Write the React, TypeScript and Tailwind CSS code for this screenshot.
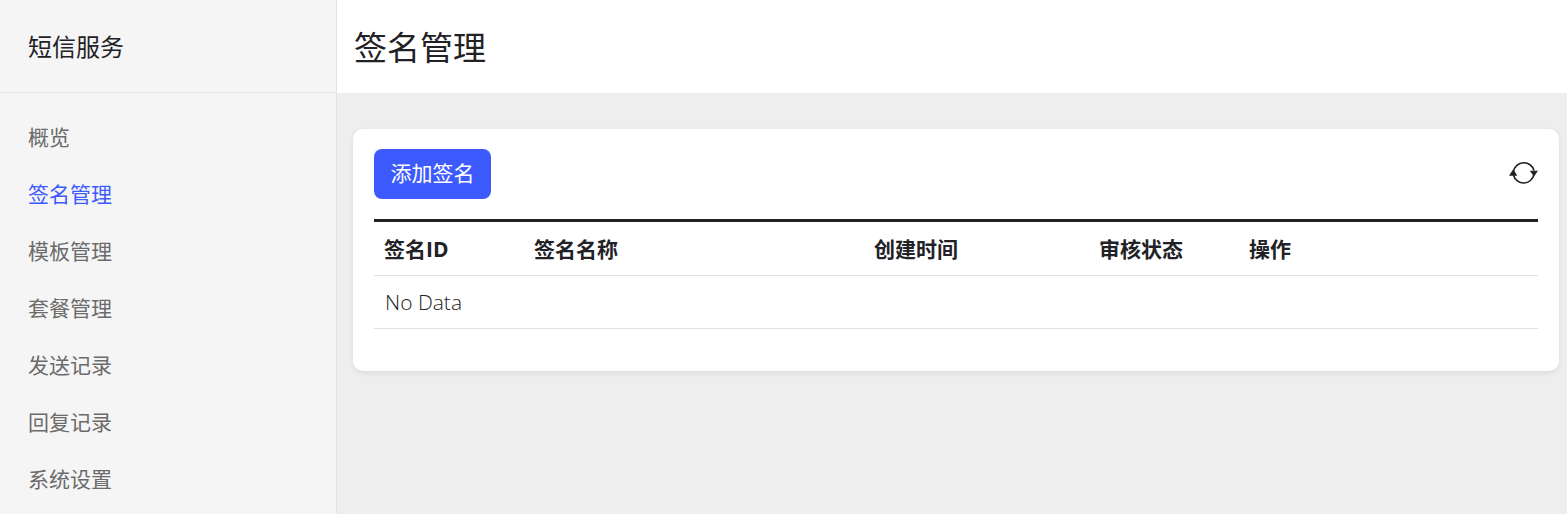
const font = { fontFamily: '"Open Sans", "Noto Sans CJK SC", sans-serif' };
const items = ['概览', '签名管理', '模板管理', '套餐管理', '发送记录', '回复记录', '系统设置'];
const cols = [
  { t: '签名ID', w: 'w-[150px]' },
  { t: '签名名称', w: 'w-[340px]' },
  { t: '创建时间', w: 'w-[225px]' },
  { t: '审核状态', w: 'w-[150px]' },
  { t: '操作', w: 'w-[299px]' },
];

export default function App() {
  return (
    <div className="flex h-[514px] w-[1567px] overflow-hidden bg-[#eeeeee] text-[#222226]" style={font}>
      <aside className="flex w-[337px] shrink-0 flex-col border-r border-[#e3e3e3] bg-[#f5f5f5]">
        <div className="flex h-[93px] shrink-0 items-center border-b border-[#e3e3e3] pl-[28px] pt-[2px] text-[24px]">短信服务</div>
        <nav className="flex flex-col pt-[16px]">
          {items.map((x, i) => (
            <div key={x} className={`flex h-[57px] items-center pl-[28px] text-[21px] ${i === 1 ? 'text-[#3d5afe]' : 'text-[#6b6b6b]'}`}>{x}</div>
          ))}
        </nav>
      </aside>
      <main className="flex min-w-0 flex-1 flex-col">
        <header className="flex h-[93px] shrink-0 items-center bg-white pl-[17px] pt-[2px] text-[33px]">签名管理</header>
        <div className="pl-[16px] pr-[8px] pt-[36px]">
          <section className="h-[242px] rounded-[10px] bg-white px-[21px] pt-[20px] shadow-[0_2px_6px_rgba(0,0,0,0.08)]">
            <div className="flex h-[50px] items-start justify-between">
              <button className="flex h-[50px] w-[117px] items-center justify-center rounded-[8px] bg-[#3d5afe] text-[21px] text-white">添加签名</button>
              <svg className="mt-[11px]" width="29" height="25" viewBox="0 0 29 25" fill="none">
                <path d="M4.5 11.5A10.5 10.5 0 0 1 25 10.5" stroke="#222226" strokeWidth="1.6" />
                <path d="M25 14.5A10.5 10.5 0 0 1 4.5 15" stroke="#222226" strokeWidth="1.6" />
                <path d="M0 15.7L4.2 9.3L8.4 15.7Z" fill="#222226" />
                <path d="M20.8 10.7L29 10.7L25 16.5Z" fill="#222226" />
              </svg>
            </div>
            <table className="mt-[20px] w-[1164px] table-fixed border-collapse border-t-[3px] border-[#222226]">
              <thead>
                <tr className="h-[55px] border-b border-[#e0e0e6]">
                  {cols.map((c) => (
                    <th key={c.t} className={`${c.w} pl-[10px] pt-[2px] text-left text-[21px] font-bold`}>{c.t}</th>
                  ))}
                </tr>
              </thead>
              <tbody>
                <tr className="h-[53px] border-b border-[#e0e0e6]">
                  <td colSpan={5} className="pl-[11px] pt-[2px] text-[21px] font-light">No Data</td>
                </tr>
              </tbody>
            </table>
          </section>
        </div>
      </main>
    </div>
  );
}
